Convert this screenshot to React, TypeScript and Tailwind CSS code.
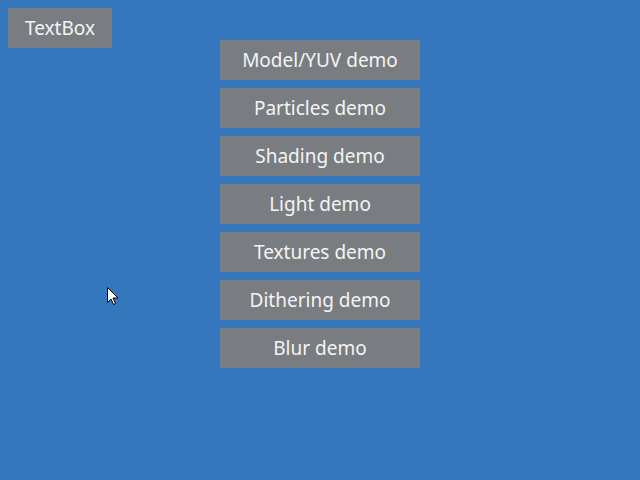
import React from "react";

const items = [
  "Model/YUV demo",
  "Particles demo",
  "Shading demo",
  "Light demo",
  "Textures demo",
  "Dithering demo",
  "Blur demo",
];

export default function App() {
  return (
    <div
      className="relative w-[640px] h-[480px] overflow-hidden bg-[#3477bd] flex items-start"
      style={{ fontFamily: '"Noto Sans", "Open Sans", sans-serif' }}
    >
      <div className="ml-2 mt-2 w-[104px] h-10 bg-[#797d81] text-[#f4f4f4] text-[19px] flex items-center justify-center">
        TextBox
      </div>
      <div className="ml-[108px] mt-10 flex flex-col gap-2">
        {items.map((t) => (
          <div
            key={t}
            className="w-[200px] h-10 bg-[#797d81] text-[#f4f4f4] text-[19px] flex items-center justify-center"
          >
            {t}
          </div>
        ))}
      </div>
      <svg
        className="absolute left-[107px] top-[287px]"
        width="12"
        height="19"
        viewBox="0 0 12 19"
      >
        <path
          d="M0.5 0.5 L0.5 15.5 L4 12 L6.5 17.5 L8.5 16.5 L6 11 L11 11 Z"
          fill="#ffffff"
          stroke="#000000"
          strokeWidth="1"
          strokeLinejoin="miter"
        />
      </svg>
    </div>
  );
}
